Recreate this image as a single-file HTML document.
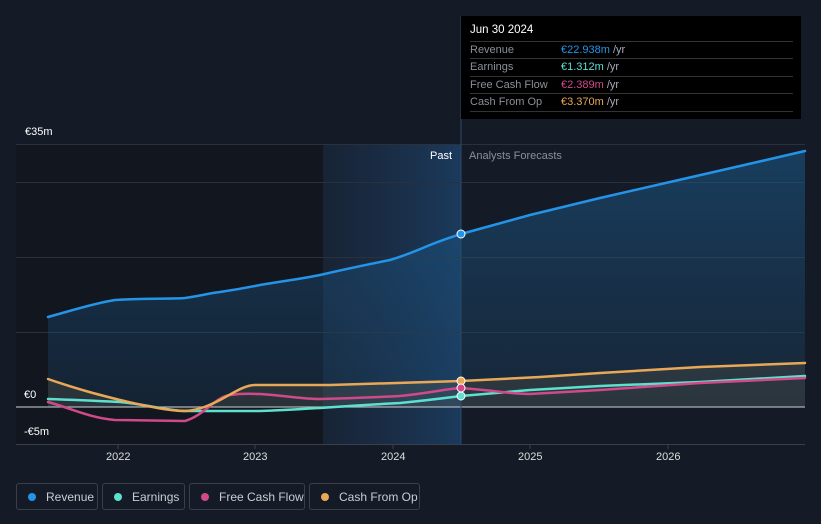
<!DOCTYPE html>
<html><head><meta charset="utf-8"><style>
body{margin:0;width:821px;height:524px;background:#151b26;font-family:"Liberation Sans",sans-serif;overflow:hidden;position:relative}
.tt{position:absolute;left:461px;top:16px;width:340px;height:103px;background:#000;color:#fff;font-size:11px}
.tt .h{position:absolute;left:9px;top:8px;font-size:11.5px}
.tt .r{position:absolute;left:9px;width:323px;border-top:1px solid #333;height:17px;line-height:17px;color:#8a8f98}
.tt .r b{font-weight:normal;position:absolute;left:91px}
.tt .r i{font-style:normal;color:#aab}
.leg{position:absolute;top:483px;height:27px;border:1px solid #3a404b;border-radius:3px;color:#c8ccd3;font-size:12px;line-height:27px;box-sizing:border-box}
.leg span{display:inline-block;width:8px;height:8px;border-radius:50%;margin:0 10px 0 11px}
.lbl{position:absolute;color:#fff;font-size:11px}
</style></head><body>
<svg width="821" height="524" style="position:absolute;left:0;top:0">
<defs>
<linearGradient id="past" x1="0" x2="1"><stop offset="0" stop-color="#1a2a40" stop-opacity=".6"/><stop offset="1" stop-color="#1b3a5c"/></linearGradient>
<linearGradient id="rev" x1="0" y1="0" x2="0" y2="1"><stop offset="0" stop-color="#1b5a8c" stop-opacity=".55"/><stop offset="1" stop-color="#1b4a70" stop-opacity=".25"/></linearGradient>
</defs>
<rect x="16" y="144" width="307" height="300" fill="#12161f"/>
<rect x="323" y="144" width="138" height="300" fill="url(#past)"/>
<g stroke="#2a313c" stroke-width="1"><line x1="16" y1="144.5" x2="805" y2="144.5"/><line x1="16" y1="182.5" x2="805" y2="182.5"/><line x1="16" y1="257.5" x2="805" y2="257.5"/><line x1="16" y1="332.5" x2="805" y2="332.5"/></g>
<path d="M48,317 C70,311 95,303 115,300 C150,298 175,299 185,298 C200,296 210,293 220,292 C240,289 250,287 260,285 C290,280 300,279 320,275 C350,268 370,264 390,260 C410,254 420,249 430,245 C445,239 452,237 461,234 L530,215 L600,198 L670,182 L740,166 L805,151 L805,407 L48,407Z" fill="url(#rev)"/>
<path d="M48,379 C80,390 100,395 120,400 C150,407 170,411 185,411 C200,410 210,405 220,400 C235,392 245,385 255,385 L330,385 L461,381 L540,377 L600,373 L700,367 L805,363 L805,407 L48,407Z" fill="#8a7a55" fill-opacity=".18"/>
<line x1="16" y1="407" x2="805" y2="407" stroke="#aab0b8" stroke-width="1.2"/>
<line x1="461" y1="16" x2="461" y2="444" stroke="#2a4a6a" stroke-width="1"/>
<line x1="16" y1="444.5" x2="805" y2="444.5" stroke="#3a404b"/>
<g fill="none" stroke-width="2.5" stroke-linecap="round">
<path d="M48,399 C80,400 100,401 120,402 C150,405 170,411 185,411 L260,411 C290,410 300,409 320,408 C360,405 380,404 400,403 C430,400 445,398 461,396 L530,390 L600,386 L700,382 L805,376" stroke="#5ee0cf"/>
<path d="M48,402 C70,408 90,418 115,420 L185,421 C205,415 215,397 230,395 C245,393 250,394 260,394 C290,396 300,399 320,399 C360,398 380,397 400,396 C430,393 445,389 461,388 C500,391 510,394 530,394 L600,390 L700,383 L805,378" stroke="#d04a8a"/>
<path d="M48,379 C80,390 100,395 120,400 C150,407 170,411 185,411 C200,410 210,405 220,400 C235,392 245,385 255,385 L330,385 L461,381 L540,377 L600,373 L700,367 L805,363" stroke="#e9a857"/>
<path d="M48,317 C70,311 95,303 115,300 C150,298 175,299 185,298 C200,296 210,293 220,292 C240,289 250,287 260,285 C290,280 300,279 320,275 C350,268 370,264 390,260 C410,254 420,249 430,245 C445,239 452,237 461,234 L530,215 L600,198 L670,182 L740,166 L805,151" stroke="#2394e8"/>
</g>
<g stroke="#fff" stroke-width="1"><circle cx="461" cy="234" r="4" fill="#2394e8"/><circle cx="461" cy="381" r="4" fill="#e9a857"/><circle cx="461" cy="388" r="4" fill="#d04a8a"/><circle cx="461" cy="396" r="4" fill="#5ee0cf"/></g>
<g stroke="#3a404b"><line x1="118" y1="444" x2="118" y2="449"/><line x1="255" y1="444" x2="255" y2="449"/><line x1="393" y1="444" x2="393" y2="449"/><line x1="530" y1="444" x2="530" y2="449"/><line x1="668" y1="444" x2="668" y2="449"/></g>
</svg>
<div class="lbl" style="left:25px;top:126px">€35m</div>
<div class="lbl" style="left:24px;top:389px">€0</div>
<div class="lbl" style="left:24px;top:426px">-€5m</div>
<div class="lbl" style="left:430px;top:150px;color:#fff">Past</div>
<div class="lbl" style="left:469px;top:150px;color:#8a8f98">Analysts Forecasts</div>
<div class="lbl" style="left:106px;top:451px;color:#ddd">2022</div>
<div class="lbl" style="left:243px;top:451px;color:#ddd">2023</div>
<div class="lbl" style="left:381px;top:451px;color:#ddd">2024</div>
<div class="lbl" style="left:518px;top:451px;color:#ddd">2025</div>
<div class="lbl" style="left:656px;top:451px;color:#ddd">2026</div>
<div class="tt"><div class="h">Jun 30 2024</div>
<div class="r" style="top:25px">Revenue<b style="color:#2394e8">€22.938m <i>/yr</i></b></div>
<div class="r" style="top:42px">Earnings<b style="color:#5ee0cf">€1.312m <i>/yr</i></b></div>
<div class="r" style="top:60px">Free Cash Flow<b style="color:#d04a8a">€2.389m <i>/yr</i></b></div>
<div class="r" style="top:77px">Cash From Op<b style="color:#e9a857">€3.370m <i>/yr</i></b></div>
<div style="position:absolute;left:9px;top:95px;width:323px;border-top:1px solid #333"></div>
</div>
<div class="leg" style="left:16px;width:82px"><span style="background:#2394e8"></span>Revenue</div>
<div class="leg" style="left:102px;width:83px"><span style="background:#5ee0cf"></span>Earnings</div>
<div class="leg" style="left:189px;width:116px"><span style="background:#d04a8a"></span>Free Cash Flow</div>
<div class="leg" style="left:309px;width:111px"><span style="background:#e9a857"></span>Cash From Op</div>
</body></html>
